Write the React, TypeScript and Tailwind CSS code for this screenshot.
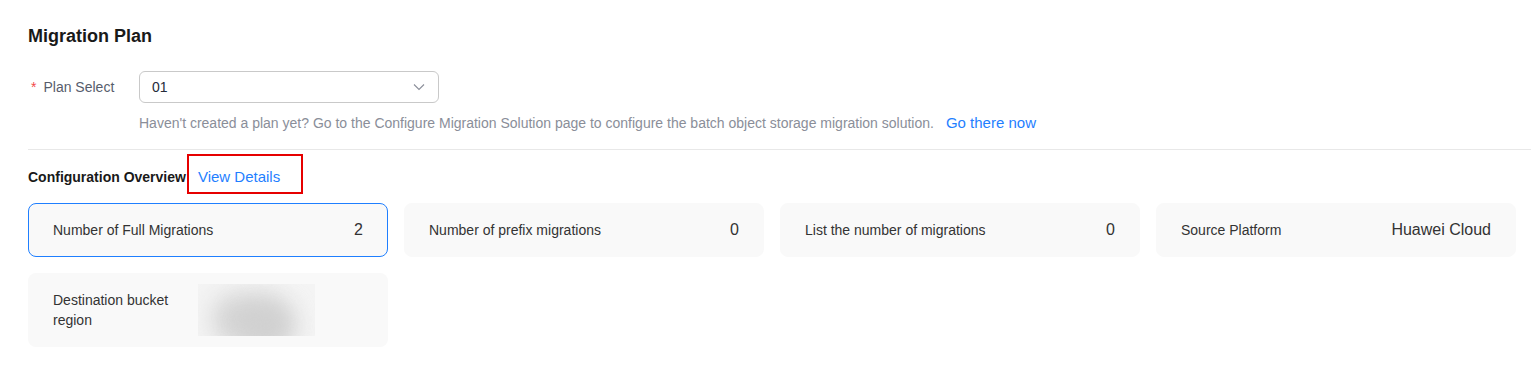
import React from "react";

function Card({ label, value, active }: { label: string; value: string; active?: boolean }) {
  return (
    <div
      className={`flex h-[54px] items-center justify-between rounded-[8px] border bg-[#f9f9f9] px-[24px] ${
        active ? "border-[#1f7fff]" : "border-[#f9f9f9]"
      }`}
    >
      <span className="text-[14px] text-[#333]">{label}</span>
      <span className="text-[16px] text-[#333]">{value}</span>
    </div>
  );
}

export default function App() {
  return (
    <div className="min-h-[368px] w-full bg-white pt-[24px] text-[#252b3a]" style={{ fontFamily: '"Liberation Sans", Arial, sans-serif' }}>
      <div className="pl-[28px] pr-[15px]">
        <h1 className="text-[18px] font-bold leading-[24px] text-[#191919]">Migration Plan</h1>
        <div className="mt-[23px] flex items-start">
          <div className="flex h-[32px] w-[111px] items-center pl-[3px] text-[14px] text-[#575d6c]">
            <span className="mr-[7px] text-[#f24a4a]">*</span>
            <span>Plan Select</span>
          </div>
          <div>
            <div className="flex h-[32px] w-[300px] items-center justify-between rounded-[6px] border border-[#c9c9c9] px-[12px] text-[14px] text-[#252b3a]">
              <span>01</span>
              <svg width="12" height="8" viewBox="0 0 12 8" fill="none" className="mr-[1px]">
                <path d="M1 1.5l5 5 5-5" stroke="#8a8e99" strokeWidth="1.1" />
              </svg>
            </div>
            <div className="mt-[10px] text-[14px] leading-[20px] text-[#8a8e99]">
              Haven't created a plan yet? Go to the Configure Migration Solution page to configure the batch object storage migration solution.
              <span className="ml-[12px] text-[15px] text-[#1f7fff]">Go there now</span>
            </div>
          </div>
        </div>
      </div>
      <div className="ml-[28px] mt-[16px] h-px bg-[#e8e8e8]" />
      <div className="pl-[28px] pr-[15px]">
        <div className="mt-[4px] flex items-center">
          <span className="mt-[6px] text-[14px] font-bold text-[#191919]">Configuration Overview</span>
          <span className="ml-[1px] flex h-[40px] w-[116px] items-center border-2 border-[#e60000] pl-[9px] pt-[6px] text-[15px] text-[#1f7fff]">
            View Details
          </span>
        </div>
        <div className="mt-[9px] grid grid-cols-4 gap-[16px]">
          <Card label="Number of Full Migrations" value="2" active />
          <Card label="Number of prefix migrations" value="0" />
          <Card label="List the number of migrations" value="0" />
          <Card label="Source Platform" value="Huawei Cloud" />
          <div className="flex h-[74px] items-center rounded-[8px] bg-[#f9f9f9] pl-[25px]">
            <span className="w-[145px] text-[14px] leading-[20px] text-[#333]">Destination bucket region</span>
            <div className="relative h-[52px] w-[117px] overflow-hidden bg-[#f4f4f4]">
              <div className="absolute left-[14px] top-[10px] h-[50px] w-[76px] rounded-full bg-[#d4d4d4] blur-md" />
              <div className="absolute left-[40px] top-[22px] h-[40px] w-[56px] rounded-full bg-[#d0d0d0] blur-md" />
            </div>
          </div>
        </div>
      </div>
    </div>
  );
}
